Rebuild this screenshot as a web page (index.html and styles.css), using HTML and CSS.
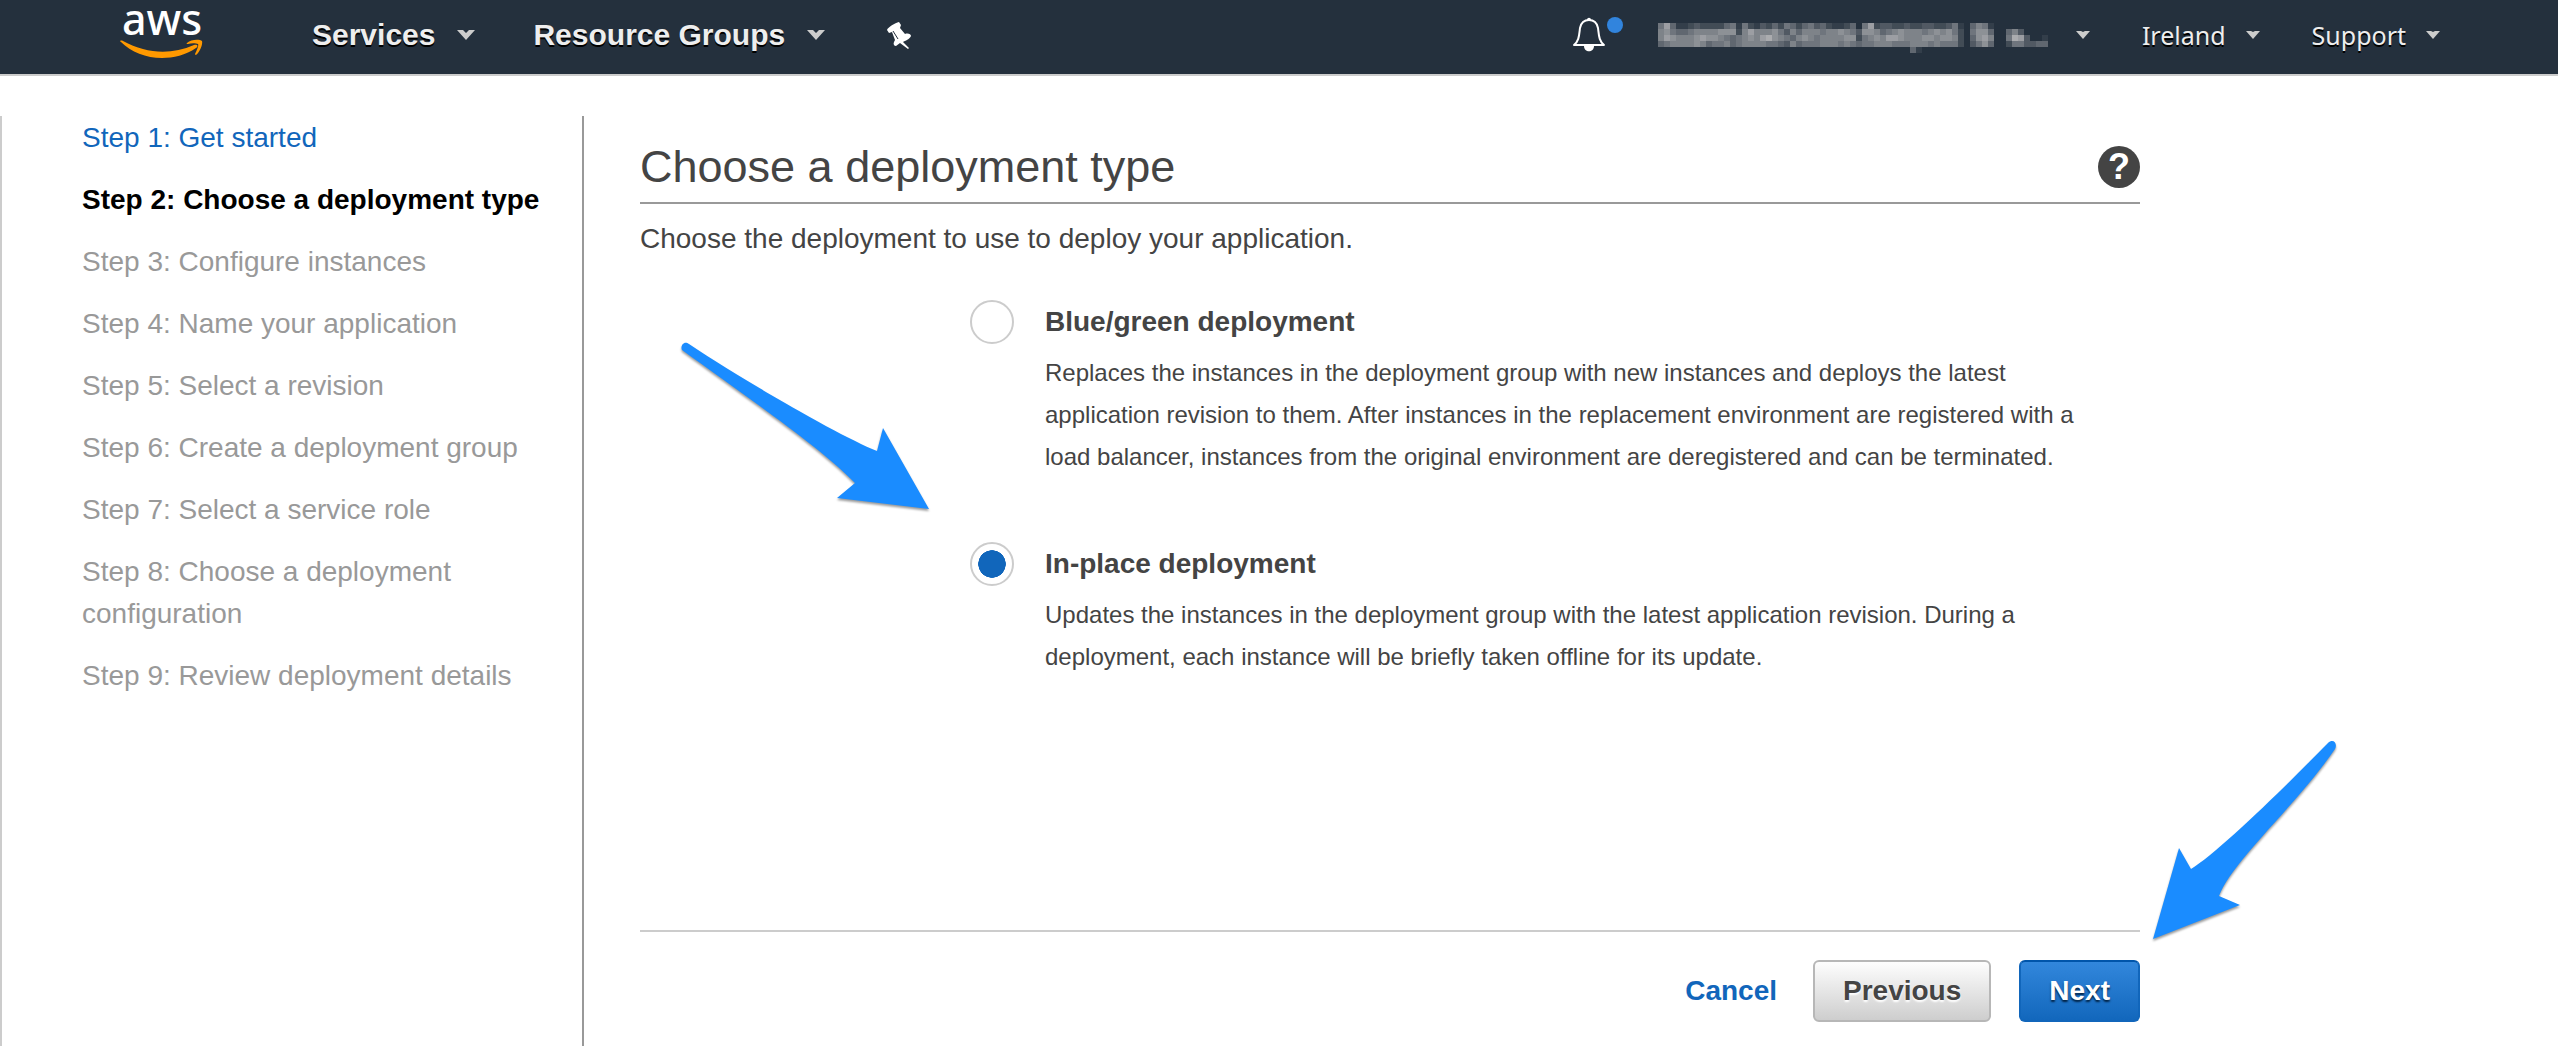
FILE: index.html
```html
<!DOCTYPE html>
<html lang="en">
<head>
<meta charset="utf-8">
<title>Choose a deployment type</title>
<link rel="stylesheet" href="styles.css">
</head>
<body>
<header class="topbar">
  <a class="logo" href="#" aria-label="AWS home">
    <svg width="84" height="58" viewBox="0 0 84 58">
      <text class="logo-text" x="42" y="35" text-anchor="middle">aws</text>
      <path class="logo-smile" d="M1 42C-1 41 1 40 3 41C27 54 51 55 74 45C77 44 79 46 76 48C66 55 53 58 42 58C26 58 11 52 1 42Z"/>
      <path class="logo-smile" d="M67 43C71 39 80 39 82 41C83 44 80 52 76 55C75 55 75 54 75 54C77 50 79 45 78 44C76 43 71 43 68 44C67 44 66 44 67 43Z"/>
    </svg>
  </a>
  <nav class="main-nav" aria-label="Main">
    <button class="nav-button" type="button">Services
      <svg class="chevron" width="18" height="10" viewBox="0 0 18 10"><path d="M0 0H6L9 3L12 0H18L9 10Z"/></svg>
    </button>
    <button class="nav-button" type="button">Resource Groups
      <svg class="chevron" width="18" height="10" viewBox="0 0 18 10"><path d="M0 0H6L9 3L12 0H18L9 10Z"/></svg>
    </button>
    <button class="nav-button pin" type="button" aria-label="Pin shortcuts">
      <svg width="24" height="27" viewBox="0 0 24 27">
        <path fill="#fff" d="M0 8C1 5 8 1 12 0L14 3L13 6L18 12C21 11 24 12 24 14C23 17 18 19 16 20L22 26L21 27L13 21L9 24C7 24 6 22 7 20L8 18L5 10L2 11Z"/>
        <path fill="none" stroke="#24303d" d="M6 9L11 17"/>
      </svg>
    </button>
  </nav>
  <div class="user-nav">
    <button class="bell" type="button" aria-label="Notifications">
      <svg width="52" height="36" viewBox="0 0 52 36">
        <path fill="none" stroke="#fff" stroke-width="2" stroke-linejoin="round" d="M2 28C7 24 7 19 8 11C9 6 12 3 17 3C22 3 25 6 26 11C27 19 27 24 32 28Z"/>
        <path fill="#fff" d="M15 3C15 0 19 0 19 3ZM12 29H22C22 36 12 36 12 29Z"/>
        <circle cx="43" cy="8" r="8" fill="#3184dd"/>
      </svg>
    </button>
    <button class="user-button account" type="button" aria-label="Account">
      <svg id="account-mask" width="390" height="36" viewBox="0 0 390 36" shape-rendering="crispEdges"></svg>
      <svg class="chevron" width="14" height="8" viewBox="0 0 14 8"><path d="M0 0H5L7 1L9 0H14L7 8Z"/></svg>
    </button>
    <button class="user-button" type="button">Ireland
      <svg class="chevron" width="14" height="8" viewBox="0 0 14 8"><path d="M0 0H5L7 1L9 0H14L7 8Z"/></svg>
    </button>
    <button class="user-button" type="button">Support
      <svg class="chevron" width="14" height="8" viewBox="0 0 14 8"><path d="M0 0H5L7 1L9 0H14L7 8Z"/></svg>
    </button>
  </div>
</header>
<div class="layout">
  <aside class="sidebar">
    <ol class="steps">
      <li><a href="#">Step 1: Get started</a></li>
      <li class="current" aria-current="step">Step 2: Choose a deployment type</li>
      <li>Step 3: Configure instances</li>
      <li>Step 4: Name your application</li>
      <li>Step 5: Select a revision</li>
      <li>Step 6: Create a deployment group</li>
      <li>Step 7: Select a service role</li>
      <li>Step 8: Choose a deployment configuration</li>
      <li>Step 9: Review deployment details</li>
    </ol>
  </aside>
  <main class="content">
    <div class="page-head">
      <h1>Choose a deployment type</h1>
      <button class="help" type="button" aria-label="Help">?</button>
    </div>
    <p class="intro">Choose the deployment to use to deploy your application.</p>
    <form>
      <div class="options">
        <div class="option">
          <input type="radio" name="type" id="blue-green" aria-describedby="blue-green-text">
          <label for="blue-green">Blue/green deployment</label>
          <p id="blue-green-text">Replaces the instances in the deployment group with new instances and deploys the latest application revision to them. After instances in the replacement environment are registered with a load balancer, instances from the original environment are deregistered and can be terminated.</p>
        </div>
        <div class="option">
          <input type="radio" name="type" id="in-place" aria-describedby="in-place-text" checked>
          <label for="in-place">In-place deployment</label>
          <p id="in-place-text">Updates the instances in the deployment group with the latest application revision. During a deployment, each instance will be briefly taken offline for its update.</p>
        </div>
      </div>
      <div class="actions">
        <a class="cancel" href="#">Cancel</a>
        <button class="button" type="button">Previous</button>
        <button class="button primary" type="submit">Next</button>
      </div>
    </form>
    <svg class="arrow arrow-option" width="252" height="174" viewBox="0 0 252 174" aria-hidden="true">
      <path d="M2 8C0 4 4 -2 9 2C66 40 160 94 197 109L203 86L249 167L157 156L175 141C144 108 60 50 2 8Z"/>
    </svg>
    <svg class="arrow arrow-next" width="188" height="204" viewBox="0 0 188 204" aria-hidden="true">
      <path d="M176 3C181 -2 186 3 183 9C144 66 81 120 67 156L88 165L1 199L27 108L39 129C65 113 130 50 176 3Z"/>
    </svg>
  </main>
</div>
<script src="mask.js"></script>
</body>
</html>
```
FILE: styles.css
```css
* { box-sizing: border-box; }

body {
  margin: 0;
  min-height: 100vh;
  display: flex;
  flex-direction: column;
  background: #fff;
  color: #444;
  font: 28px/42px "Liberation Sans", Arial, sans-serif;
}

button {
  margin: 0;
  padding: 0;
  border: 0;
  background: none;
  color: inherit;
  font: inherit;
  cursor: pointer;
}

a { color: #1166bb; text-decoration: none; }

.topbar {
  display: flex;
  align-items: center;
  height: 76px;
  padding: 0 118px 0 120px;
  border-bottom: 2px solid #ccc;
  background: #24303d;
  color: #eee;
}

.logo { display: flex; height: 58px; margin-bottom: 16px; }
.logo svg { overflow: visible; }
.logo-text { fill: #fff; font: 500 43px "Noto Sans", sans-serif; }
.logo-smile { fill: #f90; }

.main-nav { display: flex; align-items: center; gap: 58px; margin: 0 auto 4px 108px; }
.nav-button {
  display: flex;
  align-items: center;
  gap: 22px;
  font-size: 30px;
  font-weight: bold;
  text-shadow: 0 2px 0 #000;
}
.pin { margin-left: 4px; }

.chevron { fill: #ccc; }

.user-nav { display: flex; align-items: center; gap: 52px; margin-bottom: 4px; }
.bell { display: flex; margin-right: -18px; }
.user-button {
  display: flex;
  align-items: center;
  gap: 20px;
  font-family: "Noto Sans", sans-serif;
  font-size: 25px;
  text-shadow: 0 2px 0 #000;
}
.account { gap: 28px; }

.layout { flex: 1; display: flex; }

.sidebar {
  flex: 0 0 584px;
  margin-top: 40px;
  padding: 1px 42px 0 80px;
  border-left: 2px solid #ccc;
  border-right: 2px solid #999;
}
.steps {
  display: flex;
  flex-direction: column;
  gap: 20px;
  margin: 0;
  padding: 0;
  list-style: none;
  color: #999;
}
.steps .current { color: #000; font-weight: bold; }

.content {
  position: relative;
  flex: 1;
  max-width: 1556px;
  padding: 65px 0 24px 56px;
}
.page-head {
  display: flex;
  align-items: center;
  justify-content: space-between;
  padding-bottom: 9px;
  border-bottom: 2px solid #999;
}
h1 { margin: 0; font-size: 45px; font-weight: normal; line-height: 52px; }
.help {
  width: 42px;
  height: 42px;
  border-radius: 50%;
  background: #444;
  color: #fff;
  font-size: 36px;
  font-weight: bold;
  line-height: 42px;
}
.intro { margin: 14px 0 40px; }

.options { display: grid; gap: 64px; padding-left: 330px; }
.option {
  display: grid;
  grid-template-columns: 44px minmax(0, 1060px);
  align-items: center;
  gap: 8px 31px;
}
.option input {
  appearance: none;
  width: 44px;
  height: 44px;
  margin: 0;
  border: 2px solid #ccc;
  border-radius: 50%;
  background: #fff;
}
.option input:checked { padding: 6px; background: radial-gradient(circle closest-side, #1166bb 97%, #fff) content-box no-repeat; }
.option label { font-weight: bold; }
.option p { grid-column: 2; margin: 0; font-size: 24px; }

.actions {
  display: flex;
  align-items: center;
  justify-content: flex-end;
  gap: 28px;
  margin-top: 252px;
  padding-top: 28px;
  border-top: 2px solid #ccc;
}
.cancel { margin-right: 8px; font-weight: bold; }
.button {
  height: 62px;
  padding: 0 28px;
  border: 2px solid #b7b7b7;
  border-radius: 6px;
  background: linear-gradient(#fff, #ccc) border-box;
  font-weight: bold;
  text-shadow: 0 2px 2px #fff;
}
.primary {
  border-color: #0055aa #1166bb #1166bb;
  background: linear-gradient(#3388dd, #1166bb) border-box;
  color: #fff;
  text-shadow: 0 2px 2px #024;
}

/* Annotation arrows lie over the form. */
.arrow {
  position: absolute;
  fill: #1a8cff;
  filter: drop-shadow(0 2px 1px rgba(0, 0, 0, .4));
  pointer-events: none;
}
.arrow-option { left: 96px; top: 266px; }
.arrow-next { right: -200px; bottom: 102px; }
```
FILE: mask.js
```js
// Mosaic that hides the account name: one digit per 6px cell, 0 = bar colour, 9 = brightest.
const rows = [
  "58411232222451521324254245342112405823322322332235104651000000000",
  "67544566667772686667536466656676537764567666567675205774004630000",
  "68766678776545676897654676566667725676887666776776204786005983001",
  "45666676455645666655436455566656545566655566656555203574002553344",
  "00000000000000000000000000000000000000000041000000000000000000000"
];
const svg = document.getElementById("account-mask");
rows.forEach((row, y) => {
  [...row].forEach((level, x) => {
    const t = level / 10;
    const cell = document.createElementNS("http://www.w3.org/2000/svg", "rect");
    cell.setAttribute("x", x * 6);
    cell.setAttribute("y", y * 6 + 6);
    cell.setAttribute("width", 6);
    cell.setAttribute("height", 6);
    cell.setAttribute("fill", `rgb(${36 + 150 * t}, ${48 + 138 * t}, ${61 + 127 * t})`);
    svg.append(cell);
  });
});
```
